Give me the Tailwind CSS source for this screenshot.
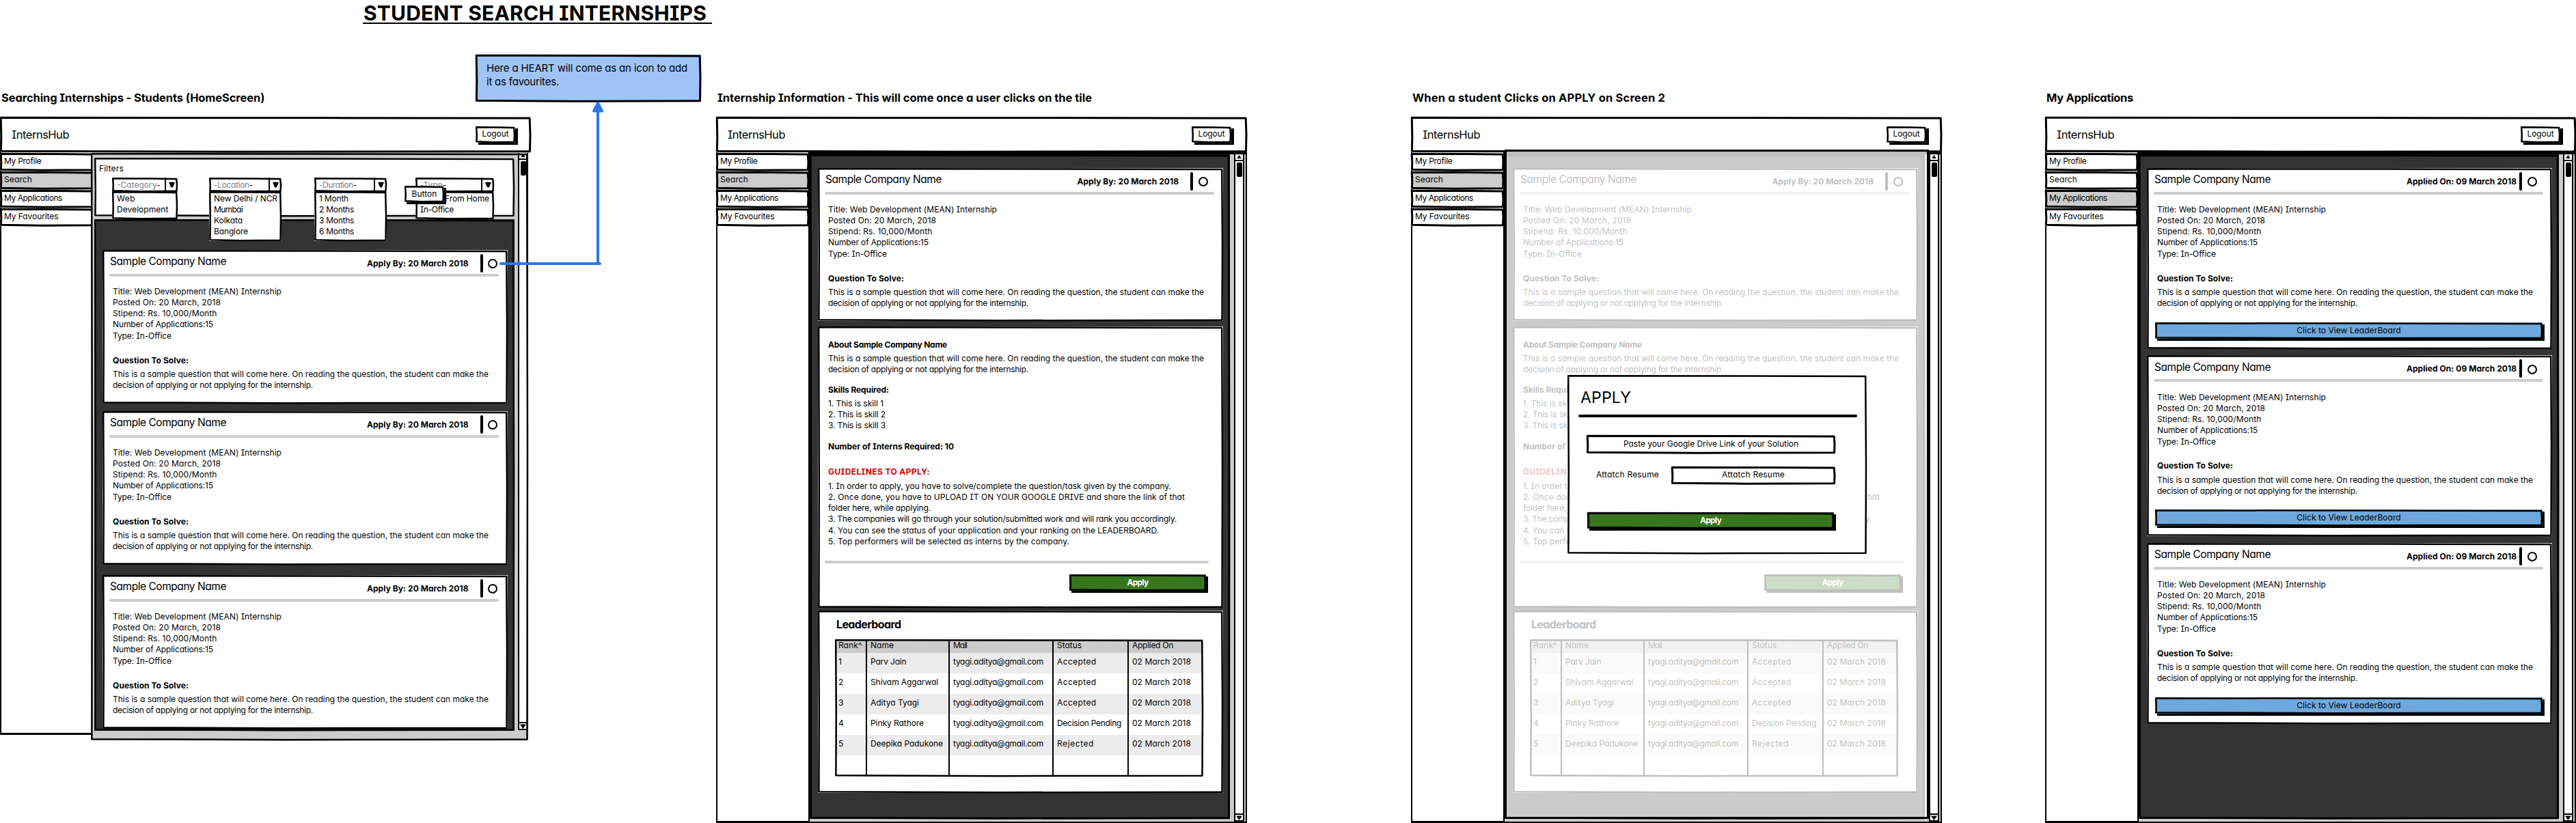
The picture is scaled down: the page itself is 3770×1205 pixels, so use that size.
<!DOCTYPE html>
<html lang="en">
<head>
<meta charset="utf-8">
<title>Student Search Internships</title>
<script src="https://cdn.jsdelivr.net/npm/@tailwindcss/browser@4"></script>
</head>
<body class="relative h-[1205px] w-[3770px] overflow-hidden bg-white font-['Inter',sans-serif] text-[12px] leading-[16px] whitespace-nowrap text-black [font-feature-settings:'cv11','cv08']">
<div class="h-[133px] pt-[4px] pl-[531px]">
  <h1 class="h-[31px] w-[511px] border-b-2 border-black pl-[1px] text-[30px] leading-[31px] font-bold"><span data-w="502">STUDENT SEARCH INTERNSHIPS</span></h1>
</div>
<main id="board" class="flex items-start"></main>

<!-- annotation and its connector -->
<aside data-sketch class="absolute top-[80px] left-[696px] h-[69px] w-[330px] bg-[#9fc5f8] pt-[10px] pl-[16px] text-[15px] leading-[20px]">
  <p><span data-w="294">Here a HEART will come as an icon to add</span></p>
  <p><span data-w="106">it as favourites.</span></p>
</aside>
<svg class="absolute top-[148px] left-[728px]" width="160" height="244" fill="none" stroke="#2b78e4" stroke-width="4" stroke-linecap="round" stroke-linejoin="round"><path d="M5 238H150M147 236V12"/><path d="M147 3L141 14.500L153 14.500Z" fill="#2b78e4"/></svg>

<script>
const t = (text, w) => `<span data-w="${w}">${text}</span>`;

const topBar = () => `
<header data-sketch class="relative flex h-[52px] items-start bg-white">
  <div class="ml-[17px] mt-[16px] text-[16.5px] leading-[20px]">${t('InternsHub', 84)}</div>
  <div data-sketch="2.5" class="relative mt-[13.500px] mr-[23px] ml-auto h-[24px] w-[58px] bg-white pt-[3.500px] text-center shadow-[4px_3px_0_#000]">${t('Logout', 39)}</div>
</header>`;

const navItem = (text, w, on) => `
<div data-sketch="3" class="relative mb-[1px] h-[26px] w-[136px] pt-[4px] pl-[6px] ${on ? 'bg-[#cccccc]' : 'bg-white'}">${t(text, w)}</div>`;

const sidebar = (active, h) => `
<nav class="${h} relative w-[135px] shrink-0 border-b-3 border-l-2 border-black bg-white"><div class="-ml-[2px] pt-[1px]">
${[['My Profile', 54.5], ['Search', 41], ['My Applications', 85], ['My Favourites', 79.5]].map(([n, w]) => navItem(n, w, n === active)).join('')}
</div></nav>`;

const scrollBar = () => `
<div class="flex w-[15px] shrink-0 flex-col border-x-2 border-black bg-white">
  <svg class="shrink-0 border-b-2 border-black" width="11" height="10" viewBox="0 0 11 10"><path d="M5.500 1L9.500 7.500H1.500Z"/></svg>
  <div class="ml-[1.500px] mt-[2px] h-[21px] w-[8px] rounded-[2px] bg-black"></div>
  <svg class="mt-auto shrink-0 border-y-2 border-black" width="11" height="12" viewBox="0 0 11 8"><path d="M5.500 8L1 1.500H10Z"/></svg>
</div>`;

const summary = (label, w, end = 'mr-[22.500px]') => `
<div class="flex h-[35px] items-start">
  <div class="mt-[7.500px] ml-[11px] text-[15.500px] leading-[20px]">${t('Sample Company Name', 170)}</div>
  <div class="mt-[12px] ml-auto font-bold">${t(label, w)}</div>
  <div class="${w > 150 ? 'ml-[4px]' : 'ml-[17px]'} mt-[6px] h-[27px] w-[4px] rounded-full bg-black"></div>
  <div class="mt-[13.500px] ${end} ml-[7.500px] h-[14px] w-[14px] rounded-full border-2 border-black"></div>
</div>
<div class="ml-[10px] h-[4px] w-[570px] rounded-full bg-[#cccccc]"></div>
<div class="mt-[14.500px] ml-[15px]">
  <p>${t('Title: Web Development (MEAN) Internship', 247)}</p>
  <p>${t('Posted On: 20 March, 2018', 158)}</p>
  <p>${t('Stipend: Rs. 10,000/Month', 152.5)}</p>
  <p>${t('Number of Applications:15', 147)}</p>
  <p class="mt-[1px]">${t('Type: In-Office', 86)}</p>
  <p class="mt-[19.500px] font-bold">${t('Question To Solve:', 111)}</p>
  <p class="mt-[4.500px]">${t('This is a sample question that will come here. On reading the question, the student can make the', 550)}</p>
  <p>${t('decision of applying or not applying for the internship.', 293)}</p>
</div>`;

const card = (cls, body) => `<article data-sketch="2.5" class="relative ${cls} w-[593px] shrink-0 bg-white">${body}</article>`;

const combo = (cls, menuCls, label, lw, items) => `
<div data-sketch="2.5" class="relative ${cls} z-10 h-[21px] bg-white">
  <div class="flex h-full">
    <div class="grow pt-[3px] pl-[7px] text-[#80808c]"><span data-w="${lw}">${label}<span class="text-black">-</span></span></div>
    <div class="flex w-[19px] items-center justify-center border-l-2 border-black"><svg width="11" height="9"><path d="M1 1Q5.500 0 10 1L7 8Q5.500 9 4 8Z"/></svg></div>
  </div>
  <div data-sketch="2.5" class="absolute top-[19.500px] left-0 w-full ${menuCls} bg-white pt-[3.500px] pl-[7px]">
    ${items.map(words => `<p class="flex gap-[5px]">${words.map(([n, w]) => t(n, w)).join('')}</p>`).join('')}
  </div>
</div>`;

const listing = () => summary('Apply By: 20 March 2018', 148.5, 'mr-[15px]');

const home = () => `
<div data-sketch="2.5" class="relative mt-[1px] -ml-[2px] flex h-[860px] w-[640px] bg-[#cccccc]">
  <div class="mt-[7px] ml-[5px] w-[615px]">
    <div data-sketch="2.5" class="relative z-10 h-[86px] bg-white pt-[8px]">
      <p class="pl-[7px]">${t('Filters', 36)}</p>
      <div class="mt-[5px] ml-[26px] flex items-start">
        ${combo('w-[96px]', 'h-[41px]', '-Category', 63.5, [[['Web', 27]], [['Development', 75.5]]])}
        ${combo('ml-[46px] w-[106px]', 'h-[73px]', '-Location', 57, [[['New Delhi / NCR', 93]], [['Mumbai', 42]], [['Kolkata', 42]], [['Banglore', 50]]])}
        ${combo('ml-[48px] w-[106px]', 'h-[73px]', '-Duration', 55, [[['1 Month', 43]], [['2 Months', 51]], [['3 Months', 51]], [['6 Months', 51]]])}
        ${combo('ml-[42px] w-[115px]', 'h-[41px]', '-Type', 38, [[['Work', 31], ['From Home', 65]], [['In-Office', 49]]])}
      </div>
      <div data-sketch="2.5" class="absolute top-[41px] left-[454px] z-20 h-[24px] w-[58px] bg-white pt-[3.500px] text-center shadow-[3px_3px_0_#000]">${t('Button', 37)}</div>
    </div>
    <div data-sketch="2.5" class="relative mt-[3.500px] flex h-[749px] flex-col bg-[#333333] pt-[45px] pl-[12px]">
      ${card('h-[224.500px]', listing())}
      ${card('mt-[11.500px] h-[224.500px]', listing())}
      ${card('mt-[15.500px] h-[224.500px]', listing())}
    </div>
  </div>
  <div class="ml-auto flex h-[845px]">${scrollBar()}</div>
</div>`;

const panel = (body, extra = '') => `
<div class="relative flex h-[982px] w-[642px] shrink-0 border-2 border-t-3 border-black bg-[#cccccc]">
  <div data-sketch="3" class="relative flex h-[973px] w-[615px] flex-col bg-[#333333] pt-[19.500px] pl-[12px]">${body}</div>
  <div class="mr-[2px] ml-auto flex">${scrollBar()}</div>
  ${extra}
</div>`;

const rows = [['1', 'Parv Jain', 'Accepted'], ['2', 'Shivam Aggarwal', 'Accepted'], ['3', 'Aditya Tyagi', 'Accepted'], ['4', 'Pinky Rathore', 'Decision Pending'], ['5', 'Deepika Padukone', 'Rejected']];
const nameW = [52.5, 99, 71, 78, 106];
const statusW = { 'Accepted': 57.5, 'Decision Pending': 94, 'Rejected': 54 };

const cell = (w, html, last) => `<div class="${w} flex items-center pb-[4px] pl-[5px] ${last ? '' : 'border-r-2 border-black'}">${html}</div>`;
const tableRow = (cls, c) => `<div class="flex ${cls}">${cell('w-[47px]', c[0])}${cell('w-[121px]', c[1])}${cell('w-[152px]', c[2])}${cell('w-[110px]', c[3])}${cell('grow', c[4], true)}</div>`;

const details = () => `
${card('h-[224px]', summary('Apply By: 20 March 2018', 148.5))}
${card('mt-[8px] h-[411.500px]', `
  <div class="pt-[19px] pl-[15px]">
    <p class="font-bold">${t('About Sample Company Name', 174)}</p>
    <p class="mt-[4px]">${t('This is a sample question that will come here. On reading the question, the student can make the', 550)}</p>
    <p>${t('decision of applying or not applying for the internship.', 293)}</p>
    <p class="mt-[14.500px] font-bold">${t('Skills Required:', 89)}</p>
    <p class="mt-[4px]">${t('1. This is skill 1', 81)}</p>
    <p>${t('2. This is skill 2', 84)}</p>
    <p>${t('3. This is skill 3', 84)}</p>
    <p class="mt-[15px] font-bold">${t('Number of Interns Required: 10', 184)}</p>
    <p class="mt-[21px] font-bold text-[#d90000]">${t('GUIDELINES TO APPLY:', 149)}</p>
    <p class="mt-[4.500px]">${t('1. In order to apply, you have to solve/complete the question/task given by the company.', 502)}</p>
    <p>${t('2. Once done, you have to UPLOAD IT ON YOUR GOOGLE DRIVE and share the link of that', 522)}</p>
    <p>${t('folder here, while applying.', 150)}</p>
    <p>${t('3. The companies will go through your solution/submitted work and will rank you accordingly.', 510)}</p>
    <p class="mt-[1px]">${t('4. You can see the status of your application and your ranking on the LEADERBOARD.', 484)}</p>
    <p>${t('5. Top performers will be selected as interns by the company.', 353)}</p>
  </div>
  <div class="mt-[20.500px] ml-[10px] h-[4px] w-[562px] rounded-full bg-[#cccccc]"></div>
  <div data-sketch="2.5" class="relative mt-[16px] ml-[368px] h-[24px] w-[200px] bg-[#38761d] pt-[4px] text-center font-bold text-white shadow-[3px_3px_0_#000]">${t('Apply', 31)}</div>
`)}
${card('mt-[5px] h-[267px]', `
  <p class="pt-[9.500px] pl-[27px] text-[16px] leading-[20px] font-bold">${t('Leaderboard', 94.5)}</p>
  <div data-sketch="2.5" class="relative mt-[12px] ml-[25px] flex h-[201px] w-[539px] flex-col">
    ${tableRow('h-[20px] bg-[#cccccc] pt-[2.500px]', [t('Rank^', 34.5), t('Name', 34), t('Mail', 20), t('Status', 36), t('Applied On', 60)])}
    ${rows.map((r, i) => tableRow('h-[30px] ' + (i % 2 ? 'bg-white' : 'bg-[#ececec]'), [t(r[0], 7), t(r[1], nameW[i]), t('tyagi.aditya@gmail.com', 132), t(r[2], statusW[r[2]]), t('02 March 2018', 86)])).join('')}
    ${tableRow('grow', ['', '', '', '', ''])}
  </div>
`)}`;

const applyDialog = () => `
<div class="absolute -top-[7px] left-0 h-[980px] w-[621px] border-3 border-black bg-white/75 bg-clip-padding"></div>
<div data-sketch="2.5" class="absolute top-[323px] left-[92px] h-[262px] w-[438px] bg-white">
  <p class="pt-[18px] pl-[19px] text-[23px] leading-[30px]">${t('APPLY', 74)}</p>
  <div class="mt-[10px] ml-[16px] h-[4px] w-[408px] rounded-full bg-black"></div>
  <div data-sketch="3" class="relative mt-[26px] ml-[28px] h-[27px] w-[364px] pt-[4.500px] text-center">${t('Paste your Google Drive Link of your Solution', 256)}</div>
  <div class="mt-[19px] ml-[42px] flex h-[26px]">
    <div class="w-[110px] pt-[4px]">${t('Attatch Resume', 92)}</div>
    <div data-sketch="3" class="relative h-[26px] w-[240px] pt-[4px] text-center">${t('Attatch Resume', 92)}</div>
  </div>
  <div data-sketch="3" class="relative mt-[41px] ml-[29px] h-[24px] w-[361px] bg-[#38761d] pt-[4px] text-center font-bold text-white shadow-[3px_3px_0_#000]">${t('Apply', 31)}</div>
</div>`;

const application = (cls) => card(cls, summary('Applied On: 09 March 2018', 161) + `
<div data-sketch="2.5" class="relative mt-[19.500px] ml-[12px] h-[24px] w-[567px] bg-[#6fa8dc] pt-[4px] text-center shadow-[3px_3px_0_#000]">${t('Click to View LeaderBoard', 152.5)}</div>`);

const applications = () => `
${application('h-[264.500px]')}
${application('mt-[10px] h-[264.500px]')}
${application('mt-[10px] h-[264.500px]')}`;

const screen = (cls, title, tw, body) => `
<section class="${cls} w-[777px] shrink-0">
  <h2 class="h-[38px] pl-[2px] text-[16.500px] leading-[20px] font-bold">${t(title, tw)}</h2>
  ${topBar()}
  <div class="flex items-start">${body}</div>
</section>`;

document.getElementById('board').innerHTML =
  screen('', 'Searching Internships - Students (HomeScreen)', 385, sidebar('Search', 'h-[853px]') + home()) +
  screen('ml-[271px]', 'Internship Information - This will come once a user clicks on the tile', 548, sidebar('Search', 'h-[982px]') + panel(details())) +
  screen('ml-[240px]', 'When a student Clicks on APPLY on Screen 2', 370, sidebar('Search', 'h-[982px]') + panel(details(), applyDialog())) +
  screen('ml-[151px]', 'My Applications', 127, sidebar('My Applications', 'h-[982px]') + panel(applications()));

const boxes = [...document.querySelectorAll('[data-sketch]')];
const outline = new Map();
for (const el of boxes) {
  el.insertAdjacentHTML('beforeend', `<svg class="pointer-events-none absolute top-0 left-0 h-full w-full overflow-visible" fill="none" stroke="black" stroke-width="${+el.dataset.sketch || 3}" stroke-linejoin="round"><path/></svg>`);
  outline.set(el, el.lastElementChild.firstElementChild);
}

function tune() {
  // tracking that gives each label its set width
  const labels = [...document.querySelectorAll('[data-w]')];
  labels.forEach(s => s.style.letterSpacing = '0px');
  const widths = labels.map(s => s.getBoundingClientRect().width);
  labels.forEach((s, i) => s.style.letterSpacing = ((s.dataset.w - widths[i]) / s.textContent.length).toFixed(3) + 'px');
  // slightly uneven, hand-drawn outline around every box
  const sizes = boxes.map(el => [el.offsetWidth, el.offsetHeight]);
  boxes.forEach((el, i) => {
    const [w, h] = sizes[i];
    outline.get(el).setAttribute('d', `M1.200 1.200L${w * .6} 1.600L${w - 1.800} 2L${w - 1} ${h * .5}L${w - 1.500} ${h - 1.200}L${w * .45} ${h - .8}L1.400 ${h - 1.800}L1.800 ${h * .55}Z`);
  });
}
tune();
addEventListener('load', tune);
document.fonts.ready.then(tune);
const watch = new ResizeObserver(tune);
document.querySelectorAll('body, #board, #board section, header, article').forEach(el => watch.observe(el));
</script>
</body>
</html>
